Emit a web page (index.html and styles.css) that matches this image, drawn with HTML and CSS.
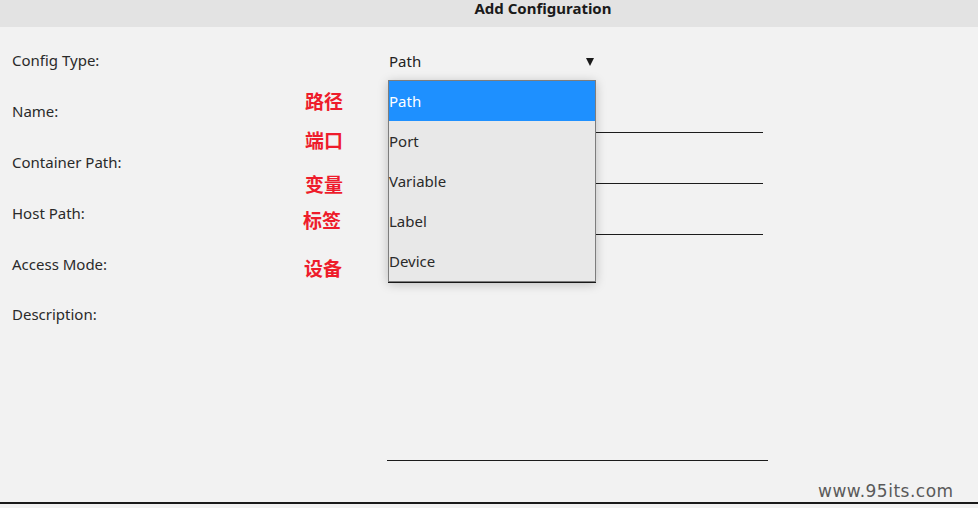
FILE: index.html
```html
<!DOCTYPE html>
<html lang="en">
<head>
<meta charset="utf-8">
<title>Add Configuration</title>
<link rel="stylesheet" href="styles.css">
</head>
<body>
<div class="dialog">
  <div class="header"><span class="title">Add Configuration</span></div>
  <form class="form">
    <div class="row">
      <label class="label">Config Type:</label>
      <div class="field select-field">
        <span class="select-value">Path</span>
        <span class="arrow"></span>
        <ul class="dropdown">
          <li class="option selected">Path</li>
          <li class="option">Port</li>
          <li class="option">Variable</li>
          <li class="option">Label</li>
          <li class="option">Device</li>
        </ul>
      </div>
    </div>
    <div class="row">
      <label class="label">Name:</label>
      <div class="field line"></div>
    </div>
    <div class="row">
      <label class="label">Container Path:</label>
      <div class="field line"></div>
    </div>
    <div class="row">
      <label class="label">Host Path:</label>
      <div class="field line"></div>
    </div>
    <div class="row">
      <label class="label">Access Mode:</label>
      <div class="field select-field short"></div>
    </div>
    <div class="row desc-row">
      <label class="label">Description:</label>
      <div class="textarea"></div>
    </div>
  </form>
  <div class="footer"></div>
  <div class="notes">
    <span class="note n1">路径</span>
    <span class="note n2">端口</span>
    <span class="note n3">变量</span>
    <span class="note n4">标签</span>
    <span class="note n5">设备</span>
  </div>
  <div class="watermark">www.95its.com</div>
</div>
</body>
</html>
```

FILE: styles.css
```css
* { box-sizing: border-box; }
html, body {
  margin: 0;
  padding: 0;
  background: #f2f2f2;
}
body {
  font-family: "Noto Sans", "Open Sans", sans-serif;
  font-size: 15px;
  color: #222;
  width: 978px;
  height: 508px;
  overflow: hidden;
}
.dialog {
  position: relative;
  height: 508px;
}
.header {
  height: 27px;
  background: #e3e3e3;
  font-weight: bold;
  font-size: 15px;
  line-height: 15px;
  padding-top: 1px;
  text-align: center;
  padding-left: 108px;
  color: #1a1a1a;
}
.title {
  display: inline-block;
  line-height: 15px;
}
.form {
  margin: 0;
  padding-top: 9px;
}
.row {
  display: flex;
  align-items: center;
  height: 51px;
}
.label {
  width: 388px;
  padding-left: 12px;
  padding-bottom: 3px;
  line-height: 20px;
  color: #2a2a2a;
}
.field {
  height: 41px;
  border-bottom: 1px solid #1c1c1c;
}
.line { width: 375px; }
.select-field {
  position: relative;
  width: 208px;
  display: flex;
  align-items: center;
  justify-content: space-between;
  padding-left: 1px;
  padding-right: 1px;
}
.short {
  height: 38px;
  margin-bottom: 3px;
}
.select-value { line-height: 20px; }
.arrow {
  width: 0;
  height: 0;
  border-left: 4px solid transparent;
  border-right: 4px solid transparent;
  border-top: 8px solid #1a1a1a;
  margin-right: 1px;
  margin-top: 2px;
}
.dropdown {
  position: absolute;
  left: 0;
  top: 39px;
  width: 208px;
  margin: 0;
  padding: 0;
  list-style: none;
  background: #e8e8e8;
  border: 1px solid #7d7d7d;
  box-shadow: 0 2px 10px rgba(0,0,0,0.22);
  z-index: 5;
}
.option {
  height: 40px;
  line-height: 40px;
  padding-left: 0;
  color: #2a2a2a;
}
.option.selected {
  background: #1e90ff;
  color: #fff;
}
.desc-row {
  align-items: flex-start;
  height: auto;
  padding-top: 3px;
}
.desc-row .label { padding-top: 10px; padding-bottom: 0; }
.textarea {
  width: 381px;
  height: 167px;
  margin-left: -1px;
  border-bottom: 1px solid #1c1c1c;
}
.footer {
  position: absolute;
  left: 0;
  right: 0;
  top: 502px;
  height: 1px;
  border-top: 2px solid #1a1a1a;
}
.note {
  position: absolute;
  left: 305px;
  color: #ee1c2b;
  font-family: "Noto Sans CJK SC", sans-serif;
  font-weight: bold;
  font-size: 19px;
  line-height: 22px;
}
.n1 { top: 90px; }
.n2 { top: 129px; }
.n3 { top: 173px; }
.n4 { top: 209px; left: 303px; }
.n5 { top: 257px; left: 304px; }
.watermark {
  position: absolute;
  left: 818px;
  top: 480px;
  font-family: "DejaVu Sans", sans-serif;
  font-size: 17px;
  line-height: 22px;
  color: #5a5a5a;
  letter-spacing: 0.5px;
}
```
